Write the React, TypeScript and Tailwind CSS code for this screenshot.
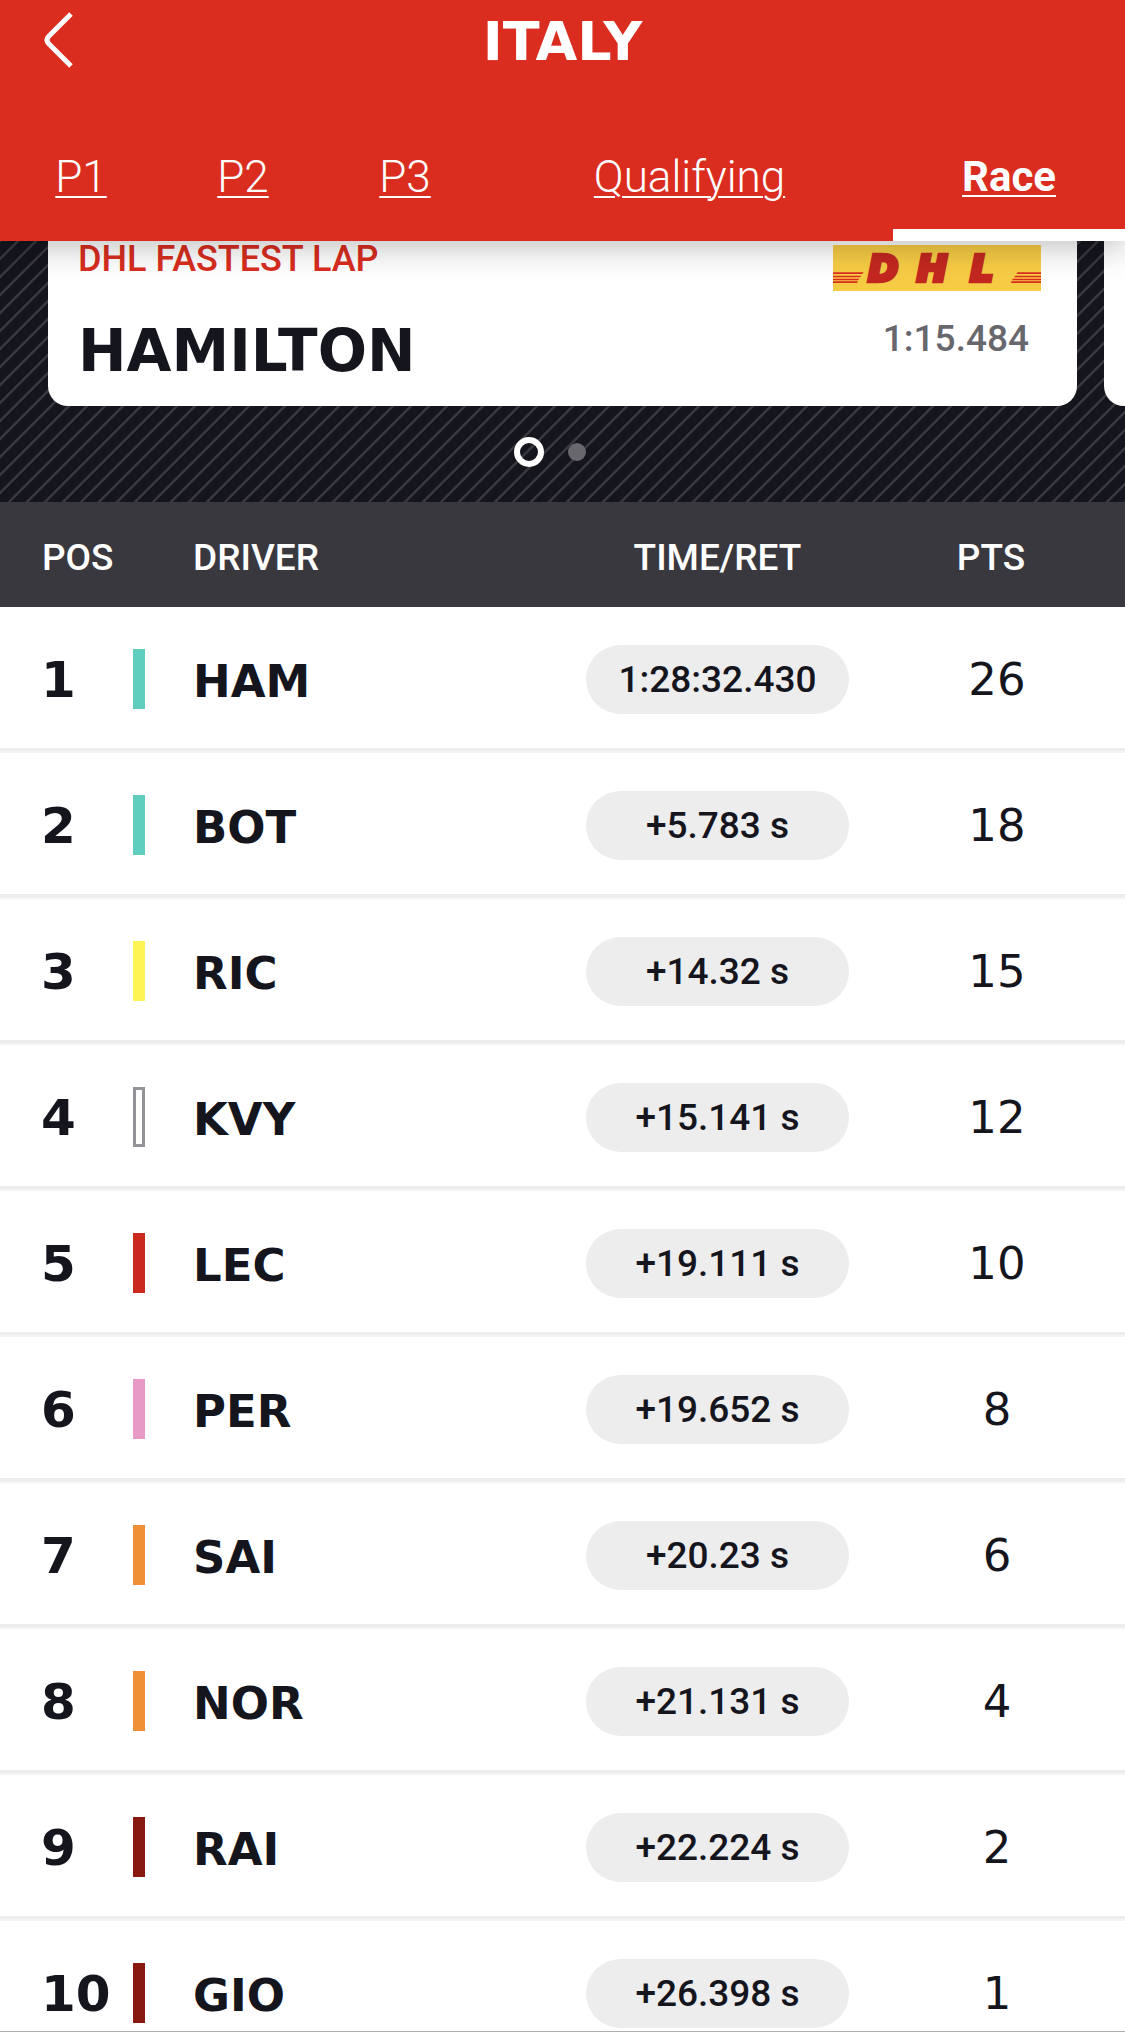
import clsx from "clsx";

const wide = "font-['DejaVu_Sans',sans-serif]";

const tabs = [
  { name: "P1", href: "#p1" },
  { name: "P2", href: "#p2" },
  { name: "P3", href: "#p3" },
  { name: "Qualifying", href: "#qualifying" },
  { name: "Race", href: "#race", active: true },
];

const results = [
  { pos: 1, driver: "HAM", time: "1:28:32.430", pts: 26, team: "bg-[#5fcebe]" },
  { pos: 2, driver: "BOT", time: "+5.783 s", pts: 18, team: "bg-[#5fcebe]" },
  { pos: 3, driver: "RIC", time: "+14.32 s", pts: 15, team: "bg-[#fdf553]" },
  { pos: 4, driver: "KVY", time: "+15.141 s", pts: 12, team: "border-3 border-[#949498] bg-white" },
  { pos: 5, driver: "LEC", time: "+19.111 s", pts: 10, team: "bg-[#ca291e]" },
  { pos: 6, driver: "PER", time: "+19.652 s", pts: 8, team: "bg-[#e89ac7]" },
  { pos: 7, driver: "SAI", time: "+20.23 s", pts: 6, team: "bg-[#ef8f36]" },
  { pos: 8, driver: "NOR", time: "+21.131 s", pts: 4, team: "bg-[#ef8f36]" },
  { pos: 9, driver: "RAI", time: "+22.224 s", pts: 2, team: "bg-[#881910]" },
  { pos: 10, driver: "GIO", time: "+26.398 s", pts: 1, team: "bg-[#881910]" },
];

function DhlLogo() {
  return (
    <svg viewBox="0 0 624 138" className="w-[208px] h-[46px]" role="img" aria-label="DHL">
      <rect width="624" height="138" fill="#f7cc45" />
      <g fill="#da2d20">
        <path d="M0 82h92l-4 5H0zM0 92h85l-4 5H0zM0 101h79l-4 5H0zM0 109h75l-3 5H0z" />
        <path d="M554 82h70v5h-74zM547 92h77v5h-81zM540 101h84v5h-88zM536 109h88v5h-91z" />
      </g>
      <g
        className="font-['DejaVu_Sans',sans-serif] font-bold italic"
        fontSize="108"
        fill="#c32820"
        stroke="#c32820"
        strokeWidth="13"
      >
        <text x="106" y="107">D</text>
        <text x="252" y="107">H</text>
        <text x="412" y="107">L</text>
      </g>
    </svg>
  );
}

function Header() {
  return (
    <header className="relative z-10 bg-[#da2d20] text-white shadow-[0_6px_32px_rgba(0,0,0,0.25)]">
      <div className="grid grid-cols-[1fr_auto_1fr] items-center h-20 px-11">
        <button aria-label="Back" className="justify-self-start">
          <svg viewBox="0 0 30 56" className="w-[30px] h-14" fill="none" stroke="white" strokeWidth="5">
            <path d="M27 2 L5 24 Q1 28 5 32 L27 54" />
          </svg>
        </button>
        <h1 className={clsx(wide, "pt-1 text-[54px] leading-[60px] font-bold")}>ITALY</h1>
      </div>
      <nav className="grid grid-cols-[162fr_162fr_162fr_407fr_232fr] h-[161px]">
        {tabs.map((tab) => (
          <a
            key={tab.name}
            href={tab.href}
            className={clsx(
              "flex items-center justify-center pt-11 underline decoration-2 underline-offset-4 border-b-12",
              tab.active
                ? "text-[42px] font-bold border-white"
                : "text-[44px] font-light border-transparent"
            )}
          >
            {tab.name}
          </a>
        ))}
      </nav>
    </header>
  );
}

function FastestLap() {
  return (
    <section className="overflow-hidden bg-[#15151e] bg-[linear-gradient(135deg,#3a383f_0_4%,transparent_6%_44%,#3a383f_46%_54%,transparent_56%_94%,#3a383f_96%)] bg-[length:18px_18px]">
      <div className="flex gap-[27px] pl-12">
        <article className="flex justify-between grow shrink-0 basis-[calc(100%-48px)] h-[165px] pl-[30px] pr-9 bg-white rounded-b-[20px]">
          <div>
            <h2 className="text-[36px] leading-[36px] font-medium text-[#da2d20]">DHL FASTEST LAP</h2>
            <p className={clsx(wide, "mt-[46px] text-[58px] leading-[56px] font-bold text-[#15151e]")}>
              HAMILTON
            </p>
          </div>
          <div className="flex flex-col items-end pt-1">
            <DhlLogo />
            <p className="pt-[28px] pr-3 text-[37px] leading-[40px] font-medium text-[#67676d]">1:15.484</p>
          </div>
        </article>
        <article className="w-full shrink-0 bg-white rounded-b-[20px]" />
      </div>
      <div className="flex items-center justify-center h-24 gap-6 pr-[26px] pb-1">
        <button aria-label="Slide 1" className="size-[30px] rounded-full border-6 border-white" />
        <button aria-label="Slide 2" className="size-[18px] rounded-full bg-[#67676d]" />
      </div>
    </section>
  );
}

function Results() {
  return (
    <table className="w-full table-fixed border-separate border-spacing-0 text-[#15151e]">
      <thead className="bg-[#3a383f] text-white text-[37px]">
        <tr className="text-left">
          <th className="w-[133px] h-[105px] p-0 pt-1.5 pl-[42px] font-medium">POS</th>
          <th className="w-[60px] p-0" aria-label="Team" />
          <th className="p-0 pt-1.5 font-medium">DRIVER</th>
          <th className="w-[263px] p-0 pt-1.5 font-medium text-center">TIME/RET</th>
          <th className="w-[276px] p-0 pt-1.5 pl-2 font-medium text-center">PTS</th>
        </tr>
      </thead>
      <tbody>
        {results.map((row) => (
          <tr
            key={row.pos}
            className="*:h-[146px] *:p-0 *:border-b-2 *:border-[#f4f4f0] *:shadow-[inset_0_-3px_#ededed]"
          >
            <td className={clsx(wide, "font-bold text-[50px]")}>
              <div className="pt-0.5 pl-[41px]">{row.pos}</div>
            </td>
            <td>
              <div className={clsx("w-3 h-[60px]", row.team)} />
            </td>
            <td className={clsx(wide, "font-bold text-[45px]")}>
              <div className="pt-1.5">{row.driver}</div>
            </td>
            <td>
              <div className="flex items-center justify-center h-[69px] pt-0.5 rounded-full bg-[#ededed] text-[37px] font-medium">
                {row.time}
              </div>
            </td>
            <td className={clsx(wide, "text-[45px] text-center")}>
              <div className="pt-0.5 pl-5">{row.pts}</div>
            </td>
          </tr>
        ))}
      </tbody>
    </table>
  );
}

export default function App() {
  return (
    <div className="flex flex-col h-dvh overflow-hidden bg-white font-[Roboto,sans-serif]">
      <Header />
      <main className="grow min-h-0 overflow-hidden">
        <FastestLap />
        <Results />
      </main>
      <footer className="shrink-0 h-0.5 border-t border-[#b0b0b0] bg-white" />
    </div>
  );
}
